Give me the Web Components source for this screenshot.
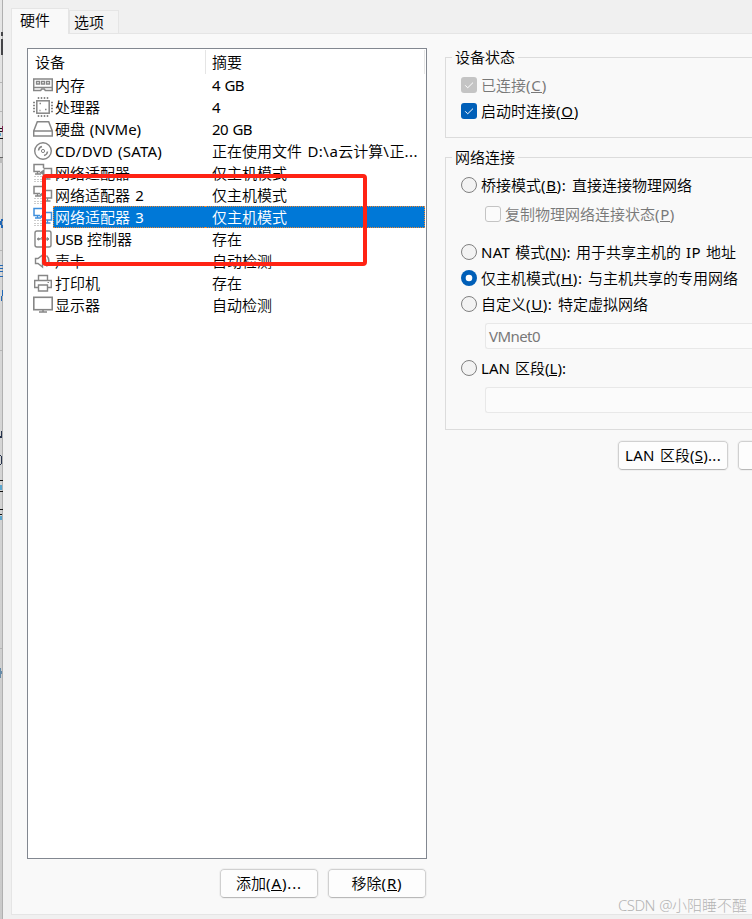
<!DOCTYPE html>
<html lang="zh-CN">
<head>
<meta charset="utf-8">
<title>虚拟机设置</title>
<style>
html,body{margin:0;height:100%;overflow:hidden}
body{background:#f0f0f0;color:#000;font:350 15px/22px "Noto Sans","Noto Sans CJK SC",sans-serif}
</style>
</head>
<body>
<vm-settings></vm-settings>
<script>
const define = (name, html, setup) => customElements.define(name, class extends HTMLElement {
  connectedCallback() {
    if (this.shadowRoot) return;
    const t = document.createElement('template');
    t.innerHTML = html;
    this.attachShadow({mode: 'open'}).append(t.content.cloneNode(true));
    if (setup) setup(this, this.shadowRoot);
  }
});

// A single line of text. Its Latin runs are tracked so that the line spans the
// width given in "w"; a "&" marks the access key that follows it.
define('ui-text', `<style>
:host{display:inline-block;white-space:pre;line-height:20px;height:22px;word-spacing:1px}
u{text-decoration:none;border-bottom:1px solid currentColor;display:inline-block;height:15px;line-height:16px}
.line{display:inline-block}
.latin{font-weight:var(--latin-weight,400)}
</style><span class="line"></span>`, (el, root) => {
  const line = root.querySelector('.line');
  const text = el.getAttribute('t');
  const latin = [];
  let n = 0;
  for (const part of text.match(/&.|[\u2e80-\uffff]+|[^\u2e80-\uffff&]+/g)) {
    const key = part[0] === '&';
    const node = document.createElement(key ? 'u' : 'span');
    node.textContent = key ? part[1] : part;
    if (part.charCodeAt(0) < 0x2e80) { node.className = 'latin'; latin.push(node); n += node.textContent.length; }
    line.append(node);
  }
  const w = +el.getAttribute('w');
  if (w && n) {
    const s = (w - line.getBoundingClientRect().width) / n + 'px';
    latin.forEach(e => e.style.letterSpacing = s);
  }
});

const icons = {
  memory: '<path d="M.7 4h18.600v8.500H.7z" stroke-width="1.500"/><path d="M3.500 6.500h3v2.500h-3zM8.500 6.500h3v2.500h-3zM13.500 6.500h3v2.500h-3z" stroke-width="1.300"/><path d="M.7 12v3.500h7l1-1.500h2.600l1 1.500h7V12" stroke-width="1.500"/>',
  cpu: '<rect x="3.800" y="3.800" width="12.400" height="12.400" stroke-width="1.500"/><path d="M5.500 0v2M8.500 0v2M11.500 0v2M14.500 0v2M5.500 18v2M8.500 18v2M11.500 18v2M14.500 18v2M0 5.500h2M0 8.500h2M0 11.500h2M0 14.500h2M18 5.500h2M18 8.500h2M18 11.500h2M18 14.500h2" stroke-width="1.500"/><path d="M6.500 6.500h1.500M12 12.500h1.500M6.500 13.500h1" stroke-width="1.500"/>',
  disk: '<path d="M4.300 2.700h11.400l3.600 9.300v5H.7v-5zM.7 12h18.600" stroke-width="1.500"/>',
  cd: '<circle cx="10" cy="10" r="8.300" stroke-width="1.400"/><circle cx="10" cy="10" r="1.600"/><path d="M5.500 9.500a4.500 4.500 0 0 1 3.500-4M14.500 10.500a4.500 4.500 0 0 1-3.500 4" stroke-width="1.500"/>',
  net: '<path d="M7 8.500H1V1.500h9.500V5" stroke-width="1.500"/><path d="M4.500 8.500v2M2 11h6" stroke-width="1.300"/><path d="M10.500 5.500h8v7.500h-7" stroke-width="1.500"/><path d="M6.500 9.500L11.500 6v7z" fill="currentColor" stroke="none"/><path d="M14.500 13v2.500M11.500 16h6" stroke-width="1.300"/><path d="M1.500 13.500h7M1.500 16.500h7M1.500 18.500h7" stroke="#999" stroke-dasharray="1 2"/>',
  usb: '<rect x="2" y="2" width="16" height="16" rx="2" stroke-width="1.400"/><path d="M4.500 10h11M7.500 10l2-2.500h2M9 10l2 2.500h1"/><circle cx="5.500" cy="10" r="1" fill="currentColor"/><path d="M14 8.500v3l2-1.500z" fill="currentColor"/>',
  sound: '<path d="M2.500 7.500H5L9.500 4v12L5 12.500H2.500z" stroke-width="1.400"/><path d="M11.500 7a4 4 0 0 1 0 6M13.500 4.500a7.500 7.500 0 0 1 0 11" stroke-width="1.500"/>',
  printer: '<path d="M5.500 7V2.500h9V7M5 14.500H1.700V7.500h16.600v7H15M5.500 12h9v6h-9z" stroke-width="1.400"/><path d="M14.500 9.500h1.500"/>',
  display: '<rect x=".8" y="2.300" width="18.400" height="12.400" stroke-width="1.600"/><path d="M6 17h8M10 15v2" stroke-width="1.500"/>'
};
define('ui-icon', `<style>:host{display:block;width:20px;height:20px;color:#868686}
svg{display:block;fill:none;stroke:currentColor}</style>
<svg width="20" height="20" viewBox="0 0 20 20"></svg>`, (el, root) => {
  root.querySelector('svg').innerHTML = icons[el.getAttribute('name')];
});

define('device-row', `<style>
:host{display:grid;grid-template-columns:20px 152px 1fr;height:22px;padding:0 1px 0 5px;align-items:center}
.a,.b{height:22px;box-sizing:border-box;display:flex;padding-top:1px}
.a{padding-left:2px}.b{padding-left:7px}
:host([selected]) .a,:host([selected]) .b{background:#0078d7;color:#fff;border:1px dotted #f0872f;padding-top:0}
:host([selected]) .a{border-right:0;padding-left:1px}
:host([selected]) .b{border-left:0}
:host([selected]) ui-icon{color:#3f8fdc}
</style><slot></slot><div class="a"></div><div class="b"></div>`, (el, root) => {
  const icon = document.createElement('ui-icon');
  icon.setAttribute('name', el.getAttribute('icon'));
  root.querySelector('slot').replaceWith(icon);
  const put = (sel, key) => {
    const t = document.createElement('ui-text');
    t.setAttribute('t', el.getAttribute(key));
    t.setAttribute('w', el.getAttribute(key + 'w'));
    root.querySelector(sel).append(t);
  };
  put('.a', 'name'); put('.b', 'info');
});

const rows = [
  ['memory','内存',30,'4 GB',32],
  ['cpu','处理器',45,'4',8],
  ['disk','硬盘 (NVMe)',86,'20 GB',40],
  ['cd','CD/DVD (SATA)',107,'正在使用文件 D:\\a云计算\\正...',206],
  ['net','网络适配器',75,'仅主机模式',75],
  ['net','网络适配器 2',89,'仅主机模式',75],
  ['net','网络适配器 3',89,'仅主机模式',75,'selected'],
  ['usb','USB 控制器',77,'存在',30],
  ['sound','声卡',30,'自动检测',60],
  ['printer','打印机',45,'存在',30],
  ['display','显示器',45,'自动检测',60]
];
define('device-list', `<style>
:host{display:block;box-sizing:border-box;width:400px;height:811px;border:1px solid #828790;background:#fff}
header{display:grid;grid-template-columns:178px 219px;height:25px}
header div{border-right:1px solid #e5e5e5;height:24px;margin-top:1px;padding:1px 0 0 7px;box-sizing:border-box}
header div+div{padding-left:6px}
</style><header><div><ui-text t="设备" w="30"></ui-text></div><div><ui-text t="摘要" w="30"></ui-text></div></header>
${rows.map(r => `<device-row icon="${r[0]}" name="${r[1]}" namew="${r[2]}" info="${r[3]}" infow="${r[4]}" ${r[5] || ''}></device-row>`).join('')}`);

define('push-button', `<style>
:host{display:flex;box-sizing:border-box;height:29px;border:1px solid #d0d0d0;border-bottom-color:#b9b9b9;border-radius:4px;background:#fdfdfd;align-items:center;justify-content:center;outline:1px solid #f0f0f0;flex:none}
::slotted(ui-text){margin-top:1px}
</style><slot></slot>`);

define('group-box', `<style>
:host{display:block;box-sizing:border-box;border:1px solid #dcdcdc;border-right:0;padding-left:15px}
.legend{display:flex;width:max-content;height:22px;margin:-11px 0 0 -9px;padding:0 3px;background:#f9f9f9}
</style><div class="legend"><slot name="legend"></slot></div><slot></slot>`);

define('choice-item', `<style>
:host{display:flex;height:26px;align-items:center;gap:4px}
:host([disabled]){color:#787878}
::slotted(ui-text){margin-top:2px}
svg{display:block;flex:none}
</style><svg width="16" height="16" viewBox="0 0 16 16" fill="none"></svg><slot></slot>`, (el, root) => {
  const on = el.hasAttribute('checked'), off = el.hasAttribute('disabled');
  const fill = off ? '#c4c4c4' : '#005fb8';
  root.querySelector('svg').innerHTML = el.getAttribute('kind') === 'radio'
    ? (on ? '<circle cx="8" cy="8" r="8" fill="#005fb8"/><circle cx="8" cy="8" r="3.300" fill="#fff"/>'
          : '<circle cx="8" cy="8" r="7.500" fill="#f3f3f3" stroke="#808080"/>')
    : (on ? `<rect width="16" height="16" rx="3" fill="${fill}"/><path d="M4.200 8.300l2.500 2.500L12 5.600" stroke="#fff"/>`
          : '<rect x=".5" y=".5" width="15" height="15" rx="2.500" fill="#fbfbfb" stroke="#c4c4c4"/>');
});

define('combo-field', `<style>
:host{display:block;box-sizing:border-box;height:26px;margin-left:24px;border:1px solid #e8e8e8;border-right:0;border-radius:3px 0 0 3px;background:#fbfbfb;color:#787878;padding:1px 0 0 3px}
</style><slot></slot>`);

// The sliver of another window that shows to the left of the dialog.
define('window-sliver', `<style>:host{display:block;width:3px;height:919px}svg{display:block}</style>
<svg width="3" height="919" shape-rendering="crispEdges">
<defs><linearGradient id="g" x1="0" y1="0" x2="0" y2="1"><stop stop-color="#e6e6e6"/><stop offset=".3" stop-color="#d8d8d8"/><stop offset="1" stop-color="#cacaca"/></linearGradient></defs>
<rect width="3" height="919" fill="url(#g)"/><rect x="2" width="1" height="919" fill="#b0b0b0"/>
<path d="M0 82h2v1H0zM0 111h2v1H0zM0 250h2v1H0zM0 350h2v1H0zM0 648h2v1H0z" fill="#b5b5b5"/>
<path d="M1 32h2v4H1zM1 39h2v16H1z" fill="#454548"/>
<path d="M0 128h3v1H0zM0 131h2v1H0zM0 138h3v1H0zM0 480h3v1H0zM0 491h3v1H0zM0 509h3v1H0zM0 514h2v1H0z" fill="#111"/>
<path d="M2 126h1v6H2z" fill="#802050"/><path d="M0 133h1v3H0zM0 485h2v5H0zM0 516h2v4H0z" fill="#5aa6cf"/>
<path d="M0 157h3v1H0z" fill="#666"/><path d="M0 158h3v5H0z" fill="#bcbcbc"/>
<path d="M1 219h2v2H1zM0 221h2v4H0zM1 225h2v3H1zM0 265h3v1H0zM0 268h3v1H0zM0 271h3v1H0zM0 276h3v1H0zM2 290h1v6H2zM1 296h1v5H1z" fill="#2167b5"/>
<path d="M1 431h1v7H1zM0 436h2v2H0zM0 455h1v1H0zM1 456h1v8H1zM0 464h1v1H0z" fill="#26334c"/>
<path d="M0 668h1v10H0zM1 671h1v3H1z" fill="#668ba8"/></svg>`);

define('vm-settings', `<style>
:host{display:grid;grid-template-columns:3px 8px 1fr;width:752px;height:919px;overflow:hidden;position:relative;background:#f0f0f0}
.dialog{grid-column:3;display:grid;grid-template-rows:33px 882px;min-width:0}
.tabs{display:flex;align-items:flex-end;position:relative;z-index:1}
.tab{box-sizing:border-box;border:1px solid #e5e5e5;border-bottom:0;height:23px;width:50px;padding:0 0 0 4px;background:#f3f3f3}
.tab.on{height:26px;width:58px;padding:0 0 0 8px;background:#f9f9f9;margin-bottom:-1px}
.panel{box-sizing:border-box;border:1px solid #e5e5e5;border-right:0;background:#f9f9f9;display:grid;grid-template-columns:400px 307px;column-gap:18px;padding:14px 0 0 15px}
.buttons{display:flex;gap:10px;justify-content:flex-end;margin:10px 1px 0 0}
.right{padding-top:9px}
.g1{height:81px;margin-bottom:19px}.g2{height:273px}
.g1 choice-item:first-of-type{margin-top:3px}
.g2 .bridge{margin-top:3px}
.g2 .sub{margin:3px 0 12px 24px}
.right .buttons{margin:11px 0 0 173px;justify-content:flex-start}
.mark{position:absolute;left:42px;top:174px;width:317px;height:84px;border:4px solid #ff2314;border-radius:4px}
.water{position:absolute;left:618px;top:895px;color:#b4b4b4;font-weight:300;--latin-weight:300}
</style>
<window-sliver></window-sliver>
<div class="dialog">
 <div class="tabs"><div class="tab on"><ui-text t="硬件" w="29"></ui-text></div><div class="tab"><ui-text t="选项" w="30"></ui-text></div></div>
 <div class="panel">
  <div><device-list></device-list>
   <div class="buttons"><push-button style="width:98px"><ui-text t="添加(&A)..." w="66"></ui-text></push-button><push-button style="width:98px"><ui-text t="移除(&R)" w="51"></ui-text></push-button></div>
  </div>
  <div class="right">
   <group-box class="g1"><ui-text slot="legend" t="设备状态" w="60"></ui-text>
    <choice-item checked disabled><ui-text t="已连接(&C)" w="66"></ui-text></choice-item>
    <choice-item checked><ui-text t="启动时连接(&O)" w="98"></ui-text></choice-item>
   </group-box>
   <group-box class="g2"><ui-text slot="legend" t="网络连接" w="60"></ui-text>
    <choice-item kind="radio" class="bridge"><ui-text t="桥接模式(&B): 直接连接物理网络" w="211"></ui-text></choice-item>
    <choice-item disabled class="sub"><ui-text t="复制物理网络连接状态(&P)" w="170"></ui-text></choice-item>
    <choice-item kind="radio"><ui-text t="NAT 模式(&N): 用于共享主机的 IP 地址" w="255"></ui-text></choice-item>
    <choice-item kind="radio" checked><ui-text t="仅主机模式(&H): 与主机共享的专用网络" w="257"></ui-text></choice-item>
    <choice-item kind="radio"><ui-text t="自定义(&U): 特定虚拟网络" w="167"></ui-text></choice-item>
    <combo-field style="margin-top:6px"><ui-text t="VMnet0" w="51"></ui-text></combo-field>
    <choice-item kind="radio" style="margin:6px 0"><ui-text t="LAN 区段(&L):" w="85"></ui-text></choice-item>
    <combo-field></combo-field>
   </group-box>
   <div class="buttons"><push-button style="width:110px"><ui-text t="LAN 区段(&S)..." w="96"></ui-text></push-button><push-button style="width:110px"></push-button></div>
  </div>
 </div>
</div>
<div class="mark"></div>
<ui-text class="water" t="CSDN @小阳睡不醒" w="129"></ui-text>`);
</script>
</body>
</html>
